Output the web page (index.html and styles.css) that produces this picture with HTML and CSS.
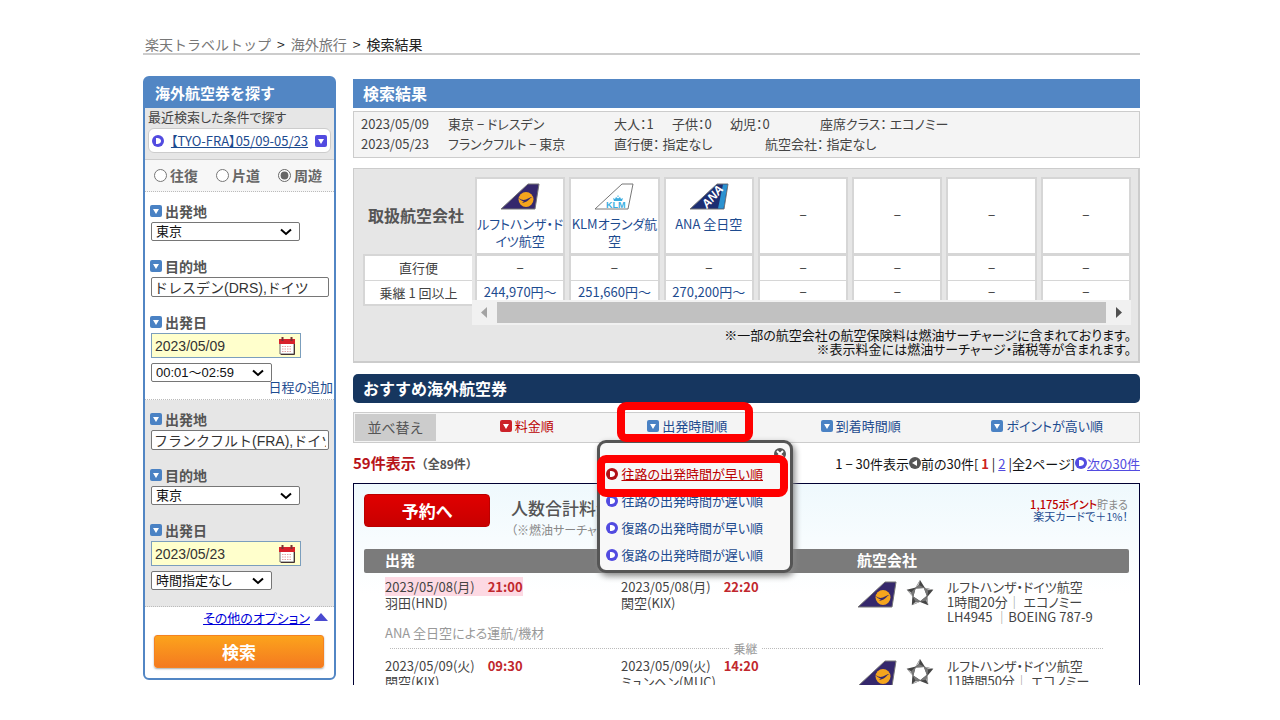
FILE: index.html
```html
<!DOCTYPE html>
<html lang="ja">
<head>
<meta charset="utf-8">
<title>検索結果</title>
<link rel="stylesheet" href="styles.css">
</head>
<body>
<svg class="defs" aria-hidden="true">
  <defs>
    <symbol id="i-down" viewBox="0 0 12 12"><rect width="12" height="12" rx="2" fill="currentColor"/><path d="M3 4h6L6 9z" fill="#fff"/></symbol>
    <symbol id="i-play" viewBox="0 0 12 12"><circle cx="6" cy="6" r="6" fill="currentColor"/><path d="M4 3c4 0 5 1.500 5 3S8 9 4 9z" fill="#fff"/></symbol>
    <symbol id="i-back" viewBox="0 0 12 12"><circle cx="6" cy="6" r="6" fill="#555"/><path d="M8 3 3 6l5 3z" fill="#fff"/></symbol>
    <symbol id="i-close" viewBox="0 0 12 12"><circle cx="6" cy="6" r="6" fill="#555"/><path d="M3 3l6 6M9 3 3 9" stroke="#fff" stroke-width="2"/></symbol>
    <symbol id="i-chevron" viewBox="0 0 12 8"><path d="M1 1.500 6 6l5-4.500" fill="none" stroke="#000" stroke-width="2"/></symbol>
    <symbol id="i-cal" viewBox="0 0 18 18"><path d="M2 6h14v11H2z" fill="#fff" stroke="#666"/><path d="M16.500 7v10.500H3" fill="none" stroke="#433" /><path d="M1 2h16v5H1z" fill="#d8202a"/><path d="M4.500 0v4M13.500 0v4" stroke="#733" stroke-width="2"/><path d="M4 9.500h10M4 12h10M4 14.500h10" stroke="#e3a3a3" stroke-dasharray="1.500 1"/></symbol>
    <symbol id="i-lh" viewBox="0 0 40 27"><path d="M1 26 28 1h11l-4 25z" fill="#35286c" stroke="#777"/><circle cx="26" cy="16.500" r="7.500" fill="#f5a51d"/><path d="M18.500 15c3 2 5 2.500 7.500 1.500 2-1 4-2.500 6.500-2.500-2.500 1-2.500 2-4.500 3.500s-3 1.500-6 2.500c1-1 1-1 2-1.500-2-.5-4-1.500-5.500-3.500z" fill="#35286c"/></symbol>
    <symbol id="i-klm" viewBox="0 0 40 27"><path d="M1 26 28 1h11l-5 25z" fill="#fff" stroke="#777"/><path d="M20 18h8l1-3-2 1-1-2-2 1.500-2-1.500-1 2-2-1zM23.500 12.500h1V14h-1z" fill="#3bade0"/><text x="12" y="25" class="logo-klm">KLM</text></symbol>
    <symbol id="i-ana" viewBox="0 0 40 27"><path d="M1 26 28 1h11l-4 25z" fill="#1c2e72" stroke="#777"/><path d="M34 1.500h4.500l-4 24H29z" fill="#2b92d0"/><text x="18" y="26" transform="rotate(-49 18 26)" class="logo-ana">ANA</text></symbol>
    <symbol id="i-star" viewBox="0 0 30 30"><g id="blade"><path d="M15 1l5 8-10 .5z" fill="#444"/><path d="M15 1l-1 5-4 3.500z" fill="#bbb"/><path d="M14 6l6 3-10 .5z" fill="#777"/></g><use href="#blade" transform="rotate(72 15 15)"/><use href="#blade" transform="rotate(144 15 15)"/><use href="#blade" transform="rotate(216 15 15)"/><use href="#blade" transform="rotate(288 15 15)"/></symbol>
  </defs>
</svg>
<div class="page">
  <nav class="crumbs"><a href="#">楽天トラベルトップ</a><span>&gt;</span><a href="#">海外旅行</a><span>&gt;</span><span>検索結果</span></nav>
  <div class="columns">
    <aside class="search">
      <h2 class="search-head">海外航空券を探す</h2>
      <form>
        <div class="recent">
          <p class="recent-label">最近検索した条件で探す</p>
          <div class="recent-box"><svg class="ico violet"><use href="#i-play"/></svg><a href="#">【TYO-FRA】05/09-05/23</a><svg class="ico violet"><use href="#i-down"/></svg></div>
        </div>
        <div class="trip">
          <label><input type="radio" name="trip">往復</label>
          <label><input type="radio" name="trip">片道</label>
          <label><input type="radio" name="trip" checked>周遊</label>
        </div>
        <div class="leg">
          <div class="field"><label class="field-name" for="from1"><svg class="ico blue"><use href="#i-down"/></svg>出発地</label>
            <div class="pick"><select id="from1"><option>東京</option></select><svg class="chev"><use href="#i-chevron"/></svg></div></div>
          <div class="field"><label class="field-name" for="to1"><svg class="ico blue"><use href="#i-down"/></svg>目的地</label>
            <input class="place" id="to1" type="text" value="ドレスデン(DRS),ドイツ"></div>
          <div class="field"><label class="field-name" for="day1"><svg class="ico blue"><use href="#i-down"/></svg>出発日</label>
            <div class="date"><input id="day1" type="text" value="2023/05/09"><svg class="cal"><use href="#i-cal"/></svg></div>
            <div class="pick time"><select aria-label="出発時間"><option>00:01～02:59</option></select><svg class="chev"><use href="#i-chevron"/></svg></div>
            <a class="add-leg" href="#">日程の追加</a></div>
        </div>
        <div class="leg shaded">
          <div class="field"><label class="field-name" for="from2"><svg class="ico blue"><use href="#i-down"/></svg>出発地</label>
            <input class="place" id="from2" type="text" value="フランクフルト(FRA),ドイツ"></div>
          <div class="field"><label class="field-name" for="to2"><svg class="ico blue"><use href="#i-down"/></svg>目的地</label>
            <div class="pick"><select id="to2"><option>東京</option></select><svg class="chev"><use href="#i-chevron"/></svg></div></div>
          <div class="field"><label class="field-name" for="day2"><svg class="ico blue"><use href="#i-down"/></svg>出発日</label>
            <div class="date"><input id="day2" type="text" value="2023/05/23"><svg class="cal"><use href="#i-cal"/></svg></div>
            <div class="pick time"><select aria-label="出発時間"><option>時間指定なし</option></select><svg class="chev"><use href="#i-chevron"/></svg></div></div>
        </div>
        <div class="more"><a href="#">その他のオプション</a><svg class="tri" viewBox="0 0 14 8"><path d="M0 8 7 0l7 8z" fill="#4a4ad0"/></svg></div>
        <button class="go" type="submit">検索</button>
      </form>
    </aside>
    <main class="main">
      <h1 class="bar">検索結果</h1>
      <div class="summary">
        <div class="sum-row"><span class="s-date">2023/05/09</span><span class="s-route">東京 − ドレスデン</span><span class="s-pax">大人：1</span><span class="s-pax">子供：0</span><span class="s-inf">幼児：0</span><span>座席クラス： エコノミー</span></div>
        <div class="sum-row"><span class="s-date">2023/05/23</span><span class="s-route">フランクフルト − 東京</span><span class="s-direct">直行便： 指定なし</span><span>航空会社： 指定なし</span></div>
      </div>
      <section class="carriers">
        <div class="carrier-grid">
          <div class="labels">
            <div class="l-head">取扱航空会社</div>
            <div class="l-row">直行便</div>
            <div class="l-row">乗継 1 回以上</div>
          </div>
          <div class="scroller">
            <div class="cols">
              <div class="col"><a class="c-head" href="#"><svg class="tail"><use href="#i-lh"/></svg>ルフトハンザ・ド<br>イツ航空</a><div class="c-row">−</div><a class="c-row last" href="#">244,970円～</a></div>
              <div class="col"><a class="c-head" href="#"><svg class="tail"><use href="#i-klm"/></svg>KLMオランダ航<br>空</a><div class="c-row">−</div><a class="c-row last" href="#">251,660円～</a></div>
              <div class="col"><a class="c-head" href="#"><svg class="tail"><use href="#i-ana"/></svg>ANA 全日空</a><div class="c-row">−</div><a class="c-row last" href="#">270,200円～</a></div>
              <div class="col"><div class="c-head none">−</div><div class="c-row">−</div><div class="c-row last">−</div></div>
              <div class="col"><div class="c-head none">−</div><div class="c-row">−</div><div class="c-row last">−</div></div>
              <div class="col"><div class="c-head none">−</div><div class="c-row">−</div><div class="c-row last">−</div></div>
              <div class="col"><div class="c-head none">−</div><div class="c-row">−</div><div class="c-row last">−</div></div>
            </div>
            <div class="track"><svg class="arr" viewBox="0 0 25 25"><path d="M15 7v11l-6-5.500z" fill="#a3a3a3"/></svg><div class="thumb"></div><svg class="arr" viewBox="0 0 25 25"><path d="M10 7v11l6-5.500z" fill="#505050"/></svg></div>
          </div>
        </div>
        <p class="notes">※一部の航空会社の航空保険料は燃油サーチャージに含まれております。<br>※表示料金には燃油サーチャージ・諸税等が含まれます。</p>
      </section>
      <h2 class="bar navy">おすすめ海外航空券</h2>
      <div class="sort">
        <div class="sort-name">並べ替え</div>
        <div class="sort-items">
          <a class="red" href="#"><svg class="ico crimson"><use href="#i-down"/></svg>料金順</a>
          <div class="sort-open"><a href="#"><svg class="ico blue"><use href="#i-down"/></svg>出発時間順</a>
            <div class="menu">
              <button class="close" aria-label="閉じる"><svg class="ico"><use href="#i-close"/></svg></button>
              <a class="red picked" href="#"><svg class="ico dark"><use href="#i-play"/></svg>往路の出発時間が早い順</a>
              <a href="#"><svg class="ico violet"><use href="#i-play"/></svg>往路の出発時間が遅い順</a>
              <a href="#"><svg class="ico violet"><use href="#i-play"/></svg>復路の出発時間が早い順</a>
              <a href="#"><svg class="ico violet"><use href="#i-play"/></svg>復路の出発時間が遅い順</a>
              <div class="mark mark-item"></div>
            </div>
            <div class="mark mark-tab"></div>
          </div>
          <a href="#"><svg class="ico blue"><use href="#i-down"/></svg>到着時間順</a>
          <a href="#"><svg class="ico blue"><use href="#i-down"/></svg>ポイントが高い順</a>
        </div>
      </div>
      <div class="count">
        <div><b class="hits">59件表示</b><b class="all">（全89件）</b></div>
        <div class="pager">1 − 30件表示<svg class="ico"><use href="#i-back"/></svg>前の30件[&nbsp;<b>1</b>&nbsp;|&nbsp;<a href="#">2</a>&nbsp;|全2ページ]<svg class="ico violet"><use href="#i-play"/></svg><a href="#">次の30件</a></div>
      </div>
      <article class="card">
        <div class="card-top">
          <button class="book">予約へ</button>
          <div class="fare"><div class="fare-name">人数合計料金</div><div class="fare-note">（※燃油サーチャージ込）</div></div>
          <div class="points"><b>1,175ポイント</b>貯まる<br><a href="#">楽天カードで＋1%！</a></div>
        </div>
        <div class="line head"><div>出発</div><div></div><div>航空会社</div></div>
        <div class="line flight">
          <div><span class="hot">2023/05/08(月)<b>21:00</b></span><br>羽田(HND)<div class="op">ANA 全日空による運航/機材</div></div>
          <div>2023/05/08(月)<b>22:20</b><br>関空(KIX)</div>
          <div class="by"><svg class="lh"><use href="#i-lh"/></svg><svg class="star"><use href="#i-star"/></svg><div>ルフトハンザ・ドイツ航空<br>1時間20分<i>｜</i> エコノミー<br>LH4945 <i>｜</i>BOEING 787-9</div></div>
        </div>
        <div class="transfer"><span>乗継</span></div>
        <div class="line flight next">
          <div>2023/05/09(火)<b>09:30</b><br>関空(KIX)</div>
          <div>2023/05/09(火)<b>14:20</b><br>ミュンヘン(MUC)</div>
          <div class="by"><svg class="lh"><use href="#i-lh"/></svg><svg class="star"><use href="#i-star"/></svg><div>ルフトハンザ・ドイツ航空<br>11時間50分<i>｜</i> エコノミー</div></div>
        </div>
      </article>
    </main>
  </div>
</div>
</body>
</html>
```

FILE: styles.css
```css
* { box-sizing: border-box; }
body { margin: 0; background: #fff; color: #444; font: 13px/15px "Noto Sans CJK JP", sans-serif; font-feature-settings: "palt"; overflow: hidden; }
h1, h2, p { margin: 0; }
a { color: #1d4b8f; text-decoration: none; }
button, input, select { font: inherit; font-feature-settings: inherit; margin: 0; }
.defs { position: absolute; width: 0; height: 0; }
.ico { width: 12px; height: 12px; flex: none; color: #555; }
.blue { color: #4a82c4; }
.violet { color: #524be0; }
.crimson { color: #cc2229; }
.dark { color: #b01116; }
a.red { color: #b00; }
.page { padding: 35px 140px 0 143px; }
.crumbs { display: flex; gap: 6px; height: 20px; padding-left: 2px; border-bottom: 2px solid #ccc; font-size: 14px; line-height: 18px; font-feature-settings: normal; color: #222; white-space: nowrap; }
.crumbs a { color: #777; }
.columns { display: flex; align-items: flex-start; gap: 17px; padding-top: 21px; }

/* search panel */
.search { flex: none; width: 193px; border: 2px solid #5286c4; border-radius: 6px; background: #fff; }
.search-head { height: 30px; padding-left: 10px; background: #5286c4; color: #fff; font-size: 15px; line-height: 30px; font-feature-settings: normal; }
.recent { height: 52px; padding: 1px 3px; background: #e6e6e6; border-bottom: 1px solid #ccc; }
.recent-label { height: 19px; line-height: 16px; white-space: nowrap; }
.recent-box { display: flex; align-items: center; height: 25px; padding: 0 3px; border: 1px solid #ccc; border-radius: 6px; background: #fff; white-space: nowrap; }
.recent-box a { flex: 1; text-align: center; text-decoration: underline; }
.trip { display: flex; justify-content: space-between; height: 32px; padding: 0 12px 0 9px; background: #f7f7f7; border-bottom: 1px dotted #bbb; }
.trip label { display: flex; align-items: center; gap: 3px; font-size: 14px; font-weight: bold; color: #666; }
.trip input { width: 13px; height: 13px; accent-color: #666; }
.leg { padding: 9px 5px 4px 6px; border-bottom: 1px dotted #bbb; }
.leg.shaded { padding-bottom: 16px; background: #e6e6e6; }
.field + .field { margin-top: 15px; }
.field-name { display: flex; align-items: center; gap: 3px; height: 20px; margin: 0 0 1px -1px; font-size: 14px; font-weight: bold; color: #555; }
.pick { position: relative; width: 149px; height: 19px; }
.pick select { appearance: none; width: 100%; height: 100%; padding: 0 4px; border: 1px solid #767676; border-radius: 2px; background: #fff; color: #111; font-family: "Liberation Sans", "Noto Sans CJK JP", sans-serif; line-height: 15px; }
.chev { position: absolute; right: 8px; top: 6px; width: 12px; height: 8px; pointer-events: none; }
.time { width: 121px; margin-top: 5px; }
.place { display: block; width: 100%; height: 20px; padding: 0 2px; border: 1px solid #767676; border-radius: 2px; background: #fff; color: #333; font: 14px "Liberation Sans", "Noto Sans CJK JP", sans-serif; }
.date { display: flex; align-items: center; width: 150px; height: 25px; padding: 0 4px 0 3px; border: 1px solid #7b9ebd; background: #ffffcc; }
.date input { flex: 1; min-width: 0; padding: 0; border: 0; background: none; color: #333; font: 14px "Liberation Sans", sans-serif; }
.cal { width: 18px; height: 18px; flex: none; }
.add-leg { display: block; margin: -3px -4px 0 0; text-align: right; line-height: 16px; }
.more { display: flex; align-items: center; justify-content: flex-end; gap: 4px; height: 20px; padding-right: 6px; }
.more a { color: #0000d8; text-decoration: underline; }
.tri { width: 14px; height: 8px; }
.go { display: block; width: calc(100% - 19px); height: 33px; margin: 8px 10px 10px 9px; border: 1px solid #f58220; border-radius: 3px; background: linear-gradient(#fca31c, #f47a20); color: #fff; font-size: 17px; font-weight: bold; box-shadow: 0 1px 2px #aaa; line-height: 20px; }

/* results */
.main { flex: 1; min-width: 0; padding-top: 3px; }
.bar { height: 29px; padding-left: 10px; background: #5286c4; color: #fff; font-size: 16px; line-height: 28px; font-feature-settings: normal; }
.navy { margin-top: 11px; border-radius: 5px; background: #16365f; }
.summary { margin-top: 3px; padding: 2px 8px 3px 7px; border: 1px solid #ccc; background: #f4f4f4; }
.sum-row { display: flex; line-height: 20px; white-space: nowrap; }
.s-date { width: 87px; }
.s-route { width: 166px; }
.s-pax { width: 58px; }
.s-inf { width: 90px; }
.s-direct { width: 151px; }
.carriers { margin-top: 10px; padding: 8px 7px 4px 9px; border: 1px solid #ccc; border-width: 1px 2px 2px 1px; background: #e6e6e6; }
.carrier-grid { display: flex; height: 148px; }
.labels { flex: none; width: 109px; text-align: center; }
.l-head { height: 77px; font-size: 16px; font-weight: bold; line-height: 76px; font-feature-settings: normal; color: #555; padding-right: 3px; }
.l-row { height: 26px; border: 2px solid #d6d6d6; border-width: 2px 0 0 2px; background: #fff; line-height: 24px; }
.l-row + .l-row { height: 26px; border-width: 1px 0 2px 2px; line-height: 23px; }
.scroller { flex: 1; min-width: 0; }
.cols { display: grid; grid-template-columns: repeat(7, 1fr); gap: 4px; height: 123px; padding-left: 3px; overflow: hidden; text-align: center; white-space: nowrap; }
.col { display: flex; flex-direction: column; border: 2px solid #d6d6d6; border-bottom: 0; background: #fff; }
.c-head { height: 77px; border-bottom: 3px solid #d6d6d6; line-height: 17px; padding-top: 4px; overflow: hidden; display: block; }
.c-head.none { padding-top: 27px; }
.tail { display: block; width: 40px; height: 27px; margin: 0 auto 5px; }
.c-row { height: 25px; border-bottom: 1px solid #d6d6d6; line-height: 24px; }
.c-row.last { border: 0; line-height: 22px; }
.logo-klm { font: bold 9px "Liberation Sans", sans-serif; fill: #3bade0; }
.logo-ana { font: italic bold 12px "Liberation Sans", sans-serif; fill: #fff; }
.track { display: flex; align-items: center; height: 25px; background: #f1f1f1; }
.thumb { flex: 1; height: 21px; background: #c1c1c1; }
.arr { width: 25px; height: 25px; }
.notes { padding: 3px 0 1px; color: #111; line-height: 14px; text-align: right; }
.sort { display: flex; height: 31px; margin-top: 9px; padding: 1px; border: 1px solid #ccc; background: #f4f4f4; }
.sort-name { width: 81px; background: #ccc; font-size: 14px; line-height: 27px; text-align: center; font-feature-settings: normal; color: #555; }
.sort-items { flex: 1; display: grid; grid-template-columns: 182fr 140fr 208fr 166fr 8fr; }
.sort-items > a, .sort-open > a { display: flex; align-items: center; justify-content: center; gap: 3px; height: 23px; }
.sort-open { position: relative; }
.menu { position: absolute; z-index: 2; left: -20px; top: 26px; width: 196px; height: 133px; padding: 17px 6px 0; border: 3px solid #555; border-radius: 9px; background: #f8f8f8; box-shadow: 2px 3px 6px #888; }
.menu a { display: flex; align-items: center; gap: 3px; height: 27px; white-space: nowrap; }
.menu .picked { text-decoration: underline; }
.close { position: absolute; right: 4px; top: 5px; width: 12px; height: 12px; padding: 0; border: 0; background: none; line-height: 0; }
.mark { position: absolute; z-index: 3; border: 8px solid #f00; border-radius: 9px; pointer-events: none; }
.mark-tab { left: 0; top: -12px; width: 136px; height: 40px; }
.mark-item { left: -3px; top: 12px; width: 191px; height: 42px; }
.count { display: flex; justify-content: space-between; align-items: center; height: 40px; white-space: nowrap; }
.hits { color: #b8141a; font-size: 15px; font-feature-settings: normal; }
.all { font-size: 12px; color: #555; font-feature-settings: normal; }
.pager { display: flex; align-items: center; color: #111; }
.pager b { color: #c22; }
.pager a { color: #524be0; text-decoration: underline; }
.card { height: 202px; overflow: hidden; padding: 10px; border: 1px solid #000033; border-bottom: 0; background: linear-gradient(#eff9fd, #fff 110px); }
.card-top { display: flex; height: 55px; white-space: nowrap; }
.book { flex: none; width: 126px; height: 33px; padding: 0; border: 1px solid #b00; border-radius: 4px; background: linear-gradient(#e00000, #c80000); color: #fff; font-size: 17px; font-weight: bold; line-height: 29px; }
.fare { flex: 1; padding-left: 21px; }
.fare-name { font-size: 17px; font-weight: 500; line-height: 28px; color: #555; }
.fare-note { font-size: 12px; line-height: 16px; color: #888; }
.points { padding: 4px 1px 0 0; font-size: 11px; line-height: 12px; text-align: right; color: #888; }
.points b { color: #b00; font-weight: 500; }
.line { display: grid; grid-template-columns: 236fr 236fr 272fr; padding-left: 21px; }
.head { height: 24px; border-radius: 2px; background: #7b7b7b; color: #fff; font-size: 15px; font-weight: bold; line-height: 22px; font-feature-settings: normal; }
.flight { padding-top: 6px; line-height: 16px; white-space: nowrap; }
.flight.next { padding-top: 2px; }
.flight b { margin-left: 13px; color: #c1272d; }
.hot { background: #fdd9e3; }
.op { margin-top: 14px; color: #999; }
.by { display: flex; line-height: 15px; }
.by i { font-style: normal; color: #999; }
.lh { width: 40px; height: 27px; margin-top: 2px; }
.star { width: 30px; height: 30px; margin: 0 12px 0 8px; }
.transfer { display: flex; align-items: center; gap: 4px; height: 15px; margin: 0 26px; font-size: 12px; color: #999; }
.transfer::before { content: ""; flex: 339; border-top: 1px dotted #bbb; }
.transfer::after { content: ""; flex: 341; border-top: 1px dotted #bbb; }
```
